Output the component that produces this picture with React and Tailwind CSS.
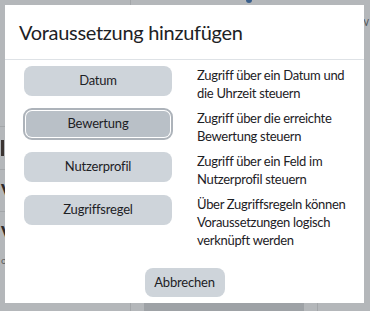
import React from "react";

const rows = [
  { label: "Datum", text: "Zugriff über ein Datum und die Uhrzeit steuern" },
  { label: "Bewertung", text: "Zugriff über die erreichte Bewertung steuern", focused: true },
  { label: "Nutzerprofil", text: "Zugriff über ein Feld im Nutzerprofil steuern" },
  { label: "Zugriffsregel", text: "Über Zugriffsregeln können Voraussetzungen logisch verknüpft werden" },
];

// dimmed page behind the modal
const Backdrop = () => (
  <div className="w-full h-full flex">
    <div className="w-[131px] shrink-0 border-r border-[#a3a6a9] flex flex-col pt-[126px]">
      <div className="h-[43px] border-t border-[#a3a6a9] flex items-center justify-end pr-[126px]">
        <span className="w-[3px] h-[16px] bg-[#3b3432]" />
      </div>
      <div className="h-[42px] border-t border-[#a3a6a9] flex items-center pl-[1px]">
        <span className="text-[20px] leading-none font-bold text-[#2f2b2a]">V</span>
      </div>
      <div className="h-[42px] border-t border-[#a3a6a9] flex items-center pl-[1px]">
        <span className="text-[20px] leading-none font-bold text-[#2f2b2a]">V</span>
      </div>
      <span className="text-[10px] leading-none text-[#5b5e61] pl-[1px] pt-[2px]">o</span>
    </div>
    <div className="flex-1 flex flex-col">
      <div className="flex pl-[115px]">
        <span className="w-[6px] h-[3px] rounded-b bg-[#3a5f8c]" />
      </div>
      <div className="flex justify-end pt-[14px] pr-[1px]">
        <span className="text-[10px] leading-none text-[#55585b]">W</span>
      </div>
      <div className="mt-auto flex h-[8px]">
        <div className="ml-[13px] w-[160px] bg-[#9ea2a6]" />
        <div className="ml-[13px] w-px bg-[#a3a6a9]" />
      </div>
    </div>
  </div>
);

export default function App() {
  return (
    <div
      className="relative w-[370px] h-[311px] overflow-hidden bg-[#b4b7ba]"
      style={{ fontFamily: "Lato, 'Open Sans', sans-serif" }}
    >
      <Backdrop />
      {/* modal dialog overlays the page */}
      <div className="absolute left-[5px] top-[5px] w-[359px] h-[298px] bg-white flex flex-col text-[#1d2125]">
        <div className="h-[55px] flex items-center pl-[14px] border-b border-[#dee2e6]">
          <h2 className="text-[20px] leading-none tracking-[-0.3px] text-[#1d2125]">Voraussetzung hinzufügen</h2>
        </div>
        <div className="pt-[6px] pl-[19px] pr-[8px] flex flex-col gap-[7px]">
          {rows.map((r) => (
            <div key={r.label} className="flex items-start gap-[25px]">
              <div className="w-[148px] h-[30px] shrink-0 flex">
                {r.focused ? (
                  <button className="m-[2px] flex-1 rounded-md bg-[#b9c0c7] text-[13px] tracking-[-0.2px] outline-2 outline-[#adb3ba] outline-offset-[1px]">
                    {r.label}
                  </button>
                ) : (
                  <button className="flex-1 rounded-lg bg-[#ced4da] text-[13px] tracking-[-0.2px]">{r.label}</button>
                )}
              </div>
              <p className="w-[155px] text-[13px] leading-[18px] tracking-[-0.3px]">{r.text}</p>
            </div>
          ))}
        </div>
        <div className="flex justify-center mt-auto pb-[6px]">
          <button className="w-[80px] h-[29px] rounded-lg bg-[#ced4da] text-[13px] tracking-[-0.2px]">Abbrechen</button>
        </div>
      </div>
    </div>
  );
}
